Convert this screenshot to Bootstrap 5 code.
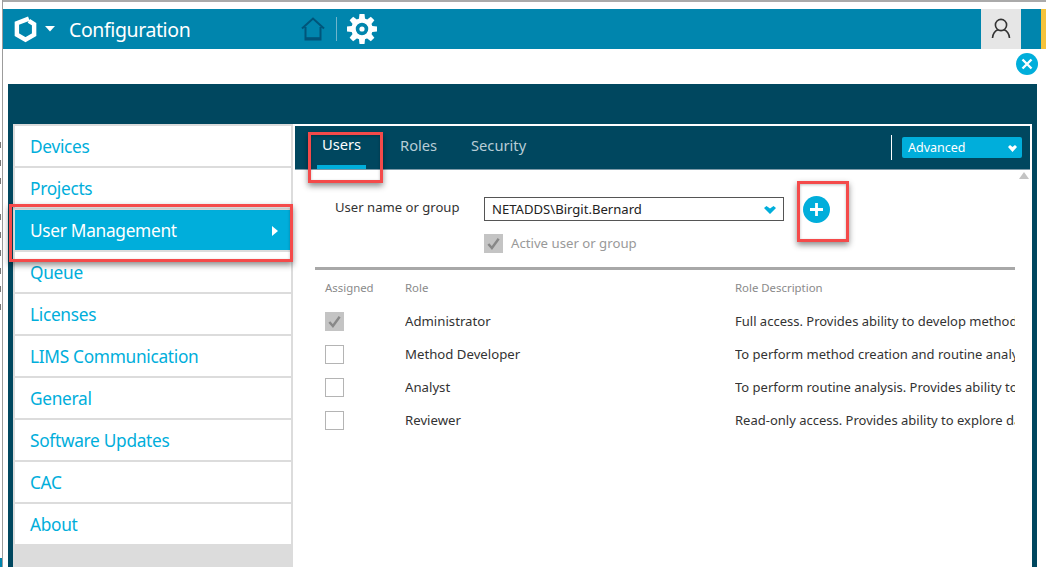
<!DOCTYPE html>
<html lang="en">
<head>
<meta charset="utf-8">
<title>Configuration</title>
<link href="https://cdn.jsdelivr.net/npm/bootstrap@5.3.0/dist/css/bootstrap.min.css" rel="stylesheet">
<style>
html,body{height:567px;overflow:hidden;background:#fff}
body{font-family:"Noto Sans","Open Sans",sans-serif;position:relative;width:1046px}
.edge-col{width:3px;height:567px;flex:none;border-right:1px solid #9c9c9c;overflow:hidden;background:#fff}
.edge-marks{width:1px;padding-top:130px;height:558px}
.edge-marks i{display:block;width:1px;height:6px;margin:12px 0;background:#777}
.edge-marks i.gap{background:transparent}
.edge-foot{height:9px;background:#0085ad}
.app-col{flex:1 1 0;min-width:0;height:567px}
.win-top{height:9px;background:#fff;border-top:2px solid #aaa}
.app-bar{height:40px;background:#0085ad;color:#fff}
.app-title{font-size:19.5px;letter-spacing:-.4px;margin-left:14px;width:232px;padding-top:2px}
.logo-box{width:23px;margin-left:11px}
.caret-box{margin-left:8px;width:10px}
.vsep{width:1px;height:24px;background:#6fb5cc;margin:0 9px 0 11px}
.user-box{width:40px;height:40px;background:#e6e6e6;margin-left:auto;margin-right:20px}
.yellow-bar{width:5px;height:40px;background:#f5c33b}
.close-row{height:35px;padding-top:4px;padding-right:8px}
.close-dot{width:22px;height:22px;border-radius:50%;background:#00aedb}
.dark-panel{background:#00475f;margin-left:5px;margin-right:9px;height:483px;padding:40px 5px 0}
.side-col{width:280px;background:#dcdcdc;padding:2px;height:443px;flex:none;border-radius:0}
.side-col .side-item{display:flex;align-items:center;justify-content:space-between;height:40px;margin:0 0 2px;padding:2px 13px 0 15px;background:#fff;color:#00aedb;font-size:17.3px;letter-spacing:-.3px;border:0;border-radius:0}
.side-col .side-item.is-on{background:#00aedb;color:#fff}
.pane-col{width:739px;background:#fff;padding:2px 2px 0;position:relative;height:443px;flex:none}
.tab-bar{height:44px;background:#00475f;border-bottom:1px solid #7d9aa8;padding-left:22px}
.tab-item{font-size:14.7px;color:#b8cdd6;height:40px;line-height:35px;display:block}
.tab-roles{width:71px}
.tab-security{width:60px}
.tab-item.is-on{width:49px;margin-right:34px;color:#fff;border-bottom:4px solid #00aedb;height:44px;text-indent:5px;line-height:38px;margin-top:-1px}
.role-sep{width:1px;height:25px;background:#fff;margin-left:auto;margin-right:10px}
.adv-box{width:120px;height:21px;background:#00aedb;border-radius:2px;color:#fff;font-size:12.5px;padding:1px 5px 0 6px;margin-right:8px}
.up-arrow{position:absolute;right:3px;top:48px;width:0;height:0;border-left:5px solid transparent;border-right:5px solid transparent;border-bottom:7px solid #c4c4c4}
.user-row{padding:27px 0 0 40px}
.user-label{width:149px;font-size:13.1px;color:#333;line-height:20px}
.user-input{width:300px;height:24px;border:1px solid #555;padding:2px 7px 0;font-size:13.1px;color:#222;border-radius:0}
.add-dot{width:27px;height:27px;border-radius:50%;background:#00aedb;margin-left:19px;margin-top:-1px}
.active-row{padding:1px 0 0 189px;margin-top:10px;height:20px;font-size:13.2px;color:#999}
input.box-check[type=checkbox]{width:19px;height:19px;margin:0;border:1px solid #b4b4b4;border-radius:0;background-color:#fff;opacity:1;flex:none;float:none}
input.box-check[type=checkbox]:checked{background-color:#c4c4c4;border-color:#c4c4c4;background-size:15px;background-image:url("data:image/svg+xml,%3Csvg xmlns='http://www.w3.org/2000/svg' viewBox='0 0 16 16'%3E%3Cpath d='M2.5 8.5l3.8 4.3L13.5 3' fill='none' stroke='%23888' stroke-width='2.6'/%3E%3C/svg%3E")}
.form-label-txt{margin-left:8px}
.grey-rule{height:3px;background:#a8a8a8;margin:14px 0 0 20px;width:700px}
.role-table{width:700px;margin-left:20px;table-layout:fixed;color:#333;font-size:13.2px}
.role-table th{height:35px;font-weight:400;color:#8a8a8a;font-size:11.4px;padding:0;vertical-align:middle}
.role-table td{height:33px;padding:0;vertical-align:middle;white-space:nowrap;overflow:hidden}
.role-table .cell-a{width:90px;padding-left:10px}
.role-table .cell-b{width:330px}
.role-table .cell-c{width:280px}
.role-table td.cell-c{font-size:13px}
.red-mark{position:absolute;border:3px solid #f44a4a;box-shadow:0 3px 6px rgba(0,0,0,.45),inset 0 1px 3px rgba(0,0,0,.25);pointer-events:none}
.mark-users{left:308px;top:132px;width:75px;height:51px}
.mark-mgmt{left:9px;top:204px;width:284px;height:58px}
.mark-add{left:797px;top:181px;width:52px;height:61px}
</style>
</head>
<body>
<div class="d-flex">
  <div class="edge-col">
    <div class="edge-marks"><i></i><i></i><i></i><i class="gap"></i><i></i><i></i><i></i><i></i><i></i><i></i></div>
    <div class="edge-foot"></div>
  </div>
  <div class="app-col">
    <div class="win-top"></div>
    <div class="app-bar d-flex align-items-center">
      <div class="logo-box d-flex">
        <svg width="24" height="28" viewBox="0 0 24 28"><path d="M15.500 3.200L3 8v12l9 5.200L21 20V9L15.500 5.500" fill="none" stroke="#fff" stroke-width="4.600"/></svg>
      </div>
      <div class="caret-box d-flex"><svg width="10" height="6" viewBox="0 0 10 6"><path d="M0 0h10L5 5.500z" fill="#fff"/></svg></div>
      <div class="app-title">Configuration</div>
      <svg width="24" height="24" viewBox="0 0 24 24"><path d="M1 11.500L12 1.500l11 10M4.500 10v12.500h15V10" fill="none" stroke="#00557a" stroke-width="2"/><path d="M4.500 21.500h15" stroke="#00557a" stroke-width="2.600"/></svg>
      <div class="vsep"></div>
      <svg width="32" height="32" viewBox="0 0 32 32"><circle cx="16" cy="16" r="8.500" fill="none" stroke="#fff" stroke-width="4.500"/><circle cx="16" cy="16" r="2.600" fill="#fff"/><g fill="#fff"><path d="M13.500 1h5l.8 7h-6.600z"/><path d="M13.500 1h5l.8 7h-6.600z" transform="rotate(45 16 16)"/><path d="M13.500 1h5l.8 7h-6.600z" transform="rotate(90 16 16)"/><path d="M13.500 1h5l.8 7h-6.600z" transform="rotate(135 16 16)"/><path d="M13.500 1h5l.8 7h-6.600z" transform="rotate(180 16 16)"/><path d="M13.500 1h5l.8 7h-6.600z" transform="rotate(225 16 16)"/><path d="M13.500 1h5l.8 7h-6.600z" transform="rotate(270 16 16)"/><path d="M13.500 1h5l.8 7h-6.600z" transform="rotate(315 16 16)"/></g></svg>
      <div class="user-box d-flex align-items-center justify-content-center">
        <svg width="20" height="22" viewBox="0 0 20 22"><circle cx="10" cy="7" r="5.600" fill="none" stroke="#333" stroke-width="1.600"/><path d="M1.500 20c.5-5 3.500-7.500 5.500-8.200M18.500 20c-.5-5-3.500-7.500-5.500-8.200" fill="none" stroke="#333" stroke-width="1.600"/></svg>
      </div>
      <div class="yellow-bar"></div>
    </div>
    <div class="close-row d-flex justify-content-end">
      <div class="close-dot d-flex align-items-center justify-content-center">
        <svg width="12" height="12" viewBox="0 0 12 12"><path d="M1.500 1.500l9 9M10.500 1.500l-9 9" stroke="#fff" stroke-width="2.400"/></svg>
      </div>
    </div>
    <div class="dark-panel d-flex">
      <div class="side-col list-group">
        <a class="side-item list-group-item" href="#">Devices</a>
        <a class="side-item list-group-item" href="#">Projects</a>
        <a class="side-item list-group-item is-on" href="#">User Management<svg width="6" height="10" viewBox="0 0 6 10"><path d="M0 0l6 5-6 5z" fill="#fff"/></svg></a>
        <a class="side-item list-group-item" href="#">Queue</a>
        <a class="side-item list-group-item" href="#">Licenses</a>
        <a class="side-item list-group-item" href="#">LIMS Communication</a>
        <a class="side-item list-group-item" href="#">General</a>
        <a class="side-item list-group-item" href="#">Software Updates</a>
        <a class="side-item list-group-item" href="#">CAC</a>
        <a class="side-item list-group-item" href="#">About</a>
      </div>
      <div class="pane-col">
        <div class="tab-bar d-flex align-items-center">
          <a class="tab-item is-on text-decoration-none" href="#">Users</a>
          <a class="tab-item tab-roles text-decoration-none" href="#">Roles</a>
          <a class="tab-item tab-security text-decoration-none" href="#">Security</a>
          <div class="role-sep"></div>
          <div class="adv-box d-flex align-items-center justify-content-between">Advanced<svg width="9" height="7" viewBox="0 0 9 7"><path d="M0 2l2-2 2.500 2L7 0l2 2-4.500 5z" fill="#fff"/></svg></div>
        </div>
        <div class="up-arrow"></div>
        <div class="user-row d-flex">
          <div class="user-label">User name or group</div>
          <div class="user-input d-flex align-items-center justify-content-between">NETADDS\Birgit.Bernard<svg width="12" height="8" viewBox="0 0 12 8"><path d="M0 2l2.500-2L6 2.500 9.500 0 12 2 6 8z" fill="#00aedb"/></svg></div>
          <div class="add-dot d-flex align-items-center justify-content-center"><svg width="13" height="13" viewBox="0 0 13 13"><path d="M6.500 0v13M0 6.500h13" stroke="#fff" stroke-width="2.800"/></svg></div>
        </div>
        <div class="active-row d-flex align-items-center">
          <input class="form-check-input box-check" type="checkbox" checked disabled aria-label="Active user or group">
          <span class="form-label-txt">Active user or group</span>
        </div>
        <div class="grey-rule"></div>
        <table class="role-table">
          <thead><tr><th class="cell-a">Assigned</th><th class="cell-b">Role</th><th class="cell-c">Role Description</th></tr></thead>
          <tbody>
            <tr><td class="cell-a"><input class="form-check-input box-check d-block" type="checkbox" checked disabled aria-label="Administrator"></td><td class="cell-b">Administrator</td><td class="cell-c">Full access. Provides ability to develop methods and</td></tr>
            <tr><td class="cell-a"><input class="form-check-input box-check d-block" type="checkbox" aria-label="Method Developer"></td><td class="cell-b">Method Developer</td><td class="cell-c">To perform method creation and routine analysis</td></tr>
            <tr><td class="cell-a"><input class="form-check-input box-check d-block" type="checkbox" aria-label="Analyst"></td><td class="cell-b">Analyst</td><td class="cell-c">To perform routine analysis. Provides ability to run</td></tr>
            <tr><td class="cell-a"><input class="form-check-input box-check d-block" type="checkbox" aria-label="Reviewer"></td><td class="cell-b">Reviewer</td><td class="cell-c">Read-only access. Provides ability to explore data</td></tr>
          </tbody>
        </table>
      </div>
    </div>
  </div>
</div>
<div class="red-mark mark-users"></div>
<div class="red-mark mark-mgmt"></div>
<div class="red-mark mark-add"></div>
</body>
</html>
